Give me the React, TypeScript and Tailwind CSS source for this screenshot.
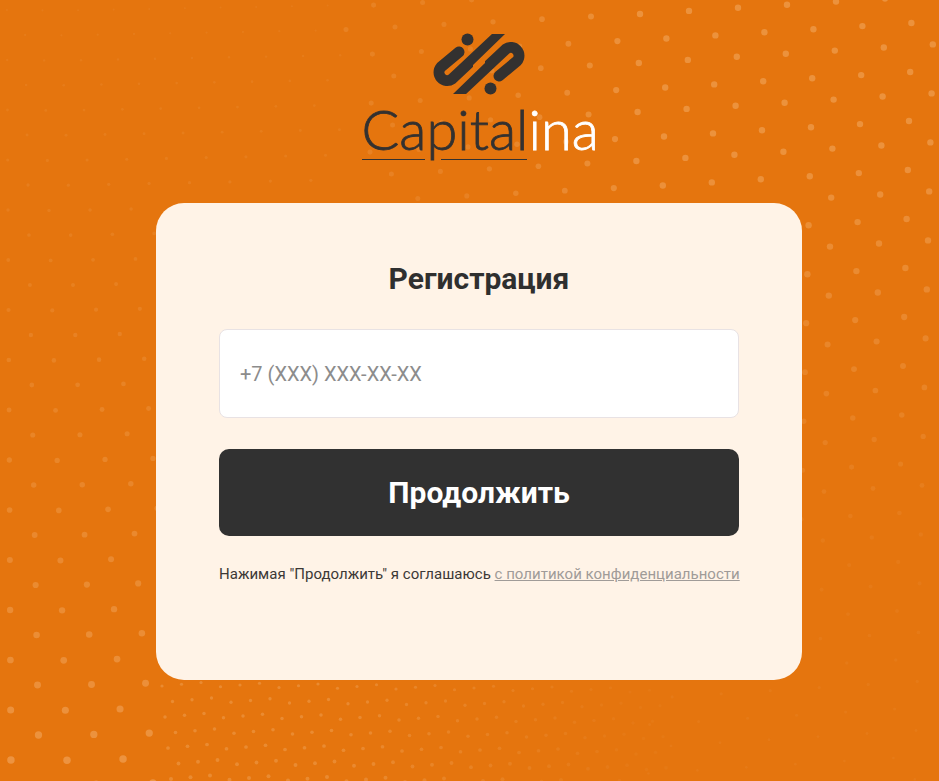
import React from "react";

type Dot = { x: number; y: number; r: number; o: number };

function clamp(v: number, a: number, b: number) {
  return Math.max(a, Math.min(b, v));
}

function buildDots(): Dot[] {
  const dots: Dot[] = [];
  // left field: staggered lattice whose cells grow toward the bottom
  for (let j = 0; j < 34; j++) {
    for (let i = -1; i < 10; i++) {
      const y0 = j * 25 + 10 + i * 0.4;
      const s = 0.86 + y0 / 1500;
      const x = (i * 41 + (j % 2) * 20.5 + 8) * s;
      const y = y0 - (x > 60 ? (x - 60) * 0.03 : 0);
      if (x > 350 && y < 200) continue;
      if (x > 160 && y > 200) continue;
      const t = clamp(y / 781, 0, 1);
      dots.push({ x, y, r: 1 + t * 2.8, o: 0.07 + t * t * 0.2 + t * 0.05 });
    }
  }
  // right field: tilted lattice, strongest at the upper right
  for (let j = -2; j < 34; j++) {
    for (let i = -8; i < 7; i++) {
      const px = 640 + i * 49 + (j % 2 === 0 ? 0 : 27);
      const x = px - j * 0.6;
      const y = j * 24.5 + 14 - i * 3.1 + (i < 0 ? i * 0.5 : 0);
      if (x < 345 || x > 945 || y < -5 || y > 785) continue;
      if (x < 800 && y > 200 && y < 680) continue;
      if (y > 680 && x < 640) continue;
      const fadeDown = clamp(1 - (y - 150) / 450, 0.1, 1);
      const fadeLeft = clamp((x - 340) / 300, 0.4, 1);
      const rBase = y < 300 ? 3.2 : 3.2 - (y - 300) / 250;
      dots.push({
        x,
        y,
        r: Math.max(1, rBase * (0.65 + 0.35 * fadeLeft)),
        o: 0.26 * fadeDown * fadeLeft + 0.03,
      });
    }
  }
  // bottom field: dense, tiny dots fading toward the right
  for (let j = 0; j < 7; j++) {
    for (let i = 0; i < 26; i++) {
      const x = 162 + i * 19.5 + (j % 2) * 9 + j * 1.5;
      const y = 686 + j * 15.5 - (i % 3) * 2 + i * 0.25;
      if (y > 785) continue;
      const f = clamp(1 - (x - 330) / 340, 0.1, 1);
      dots.push({ x, y, r: 1.6 + 0.4 * (j / 6), o: 0.2 * f + 0.02 });
    }
  }
  return dots;
}

const dots = buildDots();

function Hook() {
  return (
    <>
      <circle cx="34.5" cy="6.4" r="6" fill="#333130" />
      <path
        d="M26 19 L8 34 A8.2 8.2 0 0 0 19 46 L67 1"
        fill="none"
        stroke="#333130"
        strokeWidth="11"
        strokeLinecap="round"
        clipPath="url(#logo-clip)"
      />
    </>
  );
}

export default function App() {
  return (
    <div className="relative min-h-[781px] overflow-hidden bg-[#e5750e] font-['Roboto',sans-serif]">
      <svg className="absolute inset-0 h-[781px] w-[939px] blur-[0.4px]" viewBox="0 0 939 781" aria-hidden="true">
        {dots.map((d, k) => (
          <circle key={k} cx={d.x} cy={d.y} r={d.r} fill="#ffd9b0" fillOpacity={d.o} />
        ))}
      </svg>

      <div className="relative flex flex-col items-center pl-[19px] pt-[33px]">
        <svg className="h-[63px] w-[93px]" viewBox="0 0 93 63" aria-label="Capitalina">
          <defs>
            <clipPath id="logo-clip">
              <polygon points="-5,1 72,1 40,32 40,70 -5,70" />
            </clipPath>
          </defs>
          <Hook />
          <g transform="rotate(180 46 31)">
            <Hook />
          </g>
        </svg>

        <div className="relative mt-[3px] h-[65px] w-[235px]">
          <div className="whitespace-nowrap font-['Lato',sans-serif] text-[56px] font-light leading-[60px] text-[#333130] [-webkit-text-stroke:0.8px_#333130]">
            Capital<span className="text-white [-webkit-text-stroke:0.8px_#ffffff]">ina</span>
          </div>
          <div className="absolute left-0 top-[60px] flex gap-4">
            <span className="h-px w-[63px] bg-[#333130]" />
            <span className="h-px w-[86px] bg-[#333130]" />
          </div>
        </div>

        <main className="mt-[39px] flex h-[477px] w-[646px] flex-col rounded-[28px] bg-[#fff3e7] px-[63px] pt-[57px]">
          <h1 className="text-center text-[30px] font-bold leading-[38px] text-[#2f2f2f]">Регистрация</h1>
          <input
            type="text"
            placeholder="+7 (XXX) XXX-XX-XX"
            className="mt-[31px] h-[89px] w-full rounded-lg border border-[#e8e2e4] bg-white px-5 text-[20px] text-[#333] outline-none placeholder:text-[#8c8c8c]"
          />
          <button
            type="button"
            className="mt-[31px] h-[87px] w-full rounded-[10px] bg-[#313131] text-[30px] font-bold text-white"
          >
            Продолжить
          </button>
          <p className="mt-[29px] whitespace-nowrap text-[15px] leading-[18px] tracking-[0.02px] text-[#3c3836]">
            Нажимая "Продолжить" я соглашаюсь{" "}
            <a href="#" className="text-[#a09b98] underline">
              с политикой конфиденциальности
            </a>
          </p>
        </main>
      </div>
    </div>
  );
}
